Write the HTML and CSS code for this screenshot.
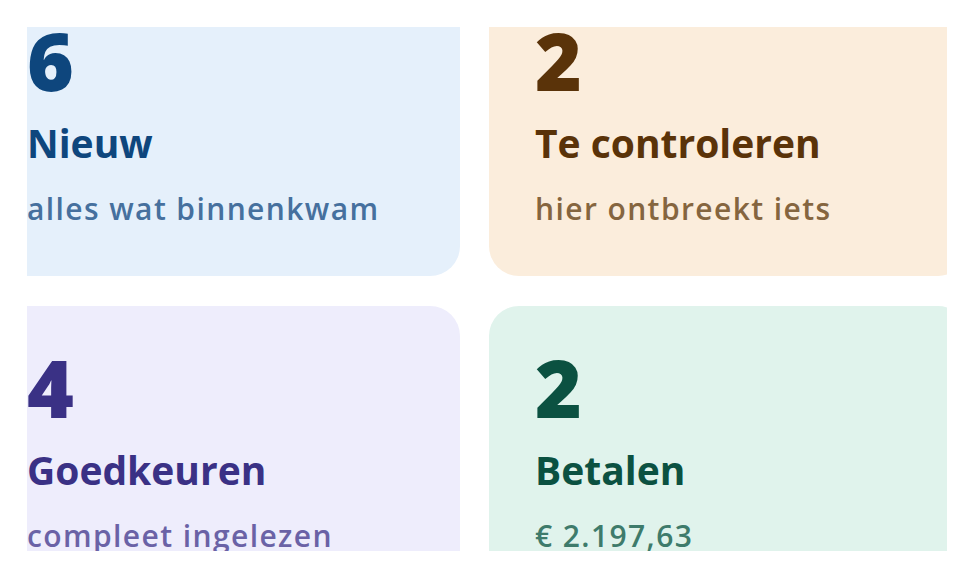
FILE: index.html
```html
<!DOCTYPE html>
<html lang="nl">
  <head>
    <meta charset="UTF-8" />
    <meta name="viewport" content="width=device-width, initial-scale=1.0" />
    <title>Facturen overzicht</title>
    <link rel="stylesheet" href="styles.css">
  </head>
  <body>
    <div class="viewport">
      <div class="tiles">
        <div class="tile tile-new">
          <div class="count">6</div>
          <div class="label">Nieuw</div>
          <div class="hint">alles wat binnenkwam</div>
        </div>
        <div class="tile tile-check">
          <div class="count">2</div>
          <div class="label">Te controleren</div>
          <div class="hint">hier ontbreekt iets</div>
        </div>
        <div class="tile tile-approve">
          <div class="count">4</div>
          <div class="label">Goedkeuren</div>
          <div class="hint">compleet ingelezen</div>
        </div>
        <div class="tile tile-pay">
          <div class="count">2</div>
          <div class="label">Betalen</div>
          <div class="hint">€ 2.197,63</div>
        </div>
      </div>
    </div>
  </body>
</html>
```

FILE: styles.css
```css
body {
  margin: 0;
  background: #fff;
  font-family: 'Open Sans', 'Noto Sans', sans-serif;
}
.viewport {
  margin: 27px 0 0 27px;
  width: 920px;
  height: 524px;
  overflow: hidden; /* het overzicht is uitgesneden */
}
.tiles {
  display: grid;
  grid-template-columns: 479px 479px;
  column-gap: 29px;
  row-gap: 30px;
  margin: -48px 0 0 -46px;
}
.tile {
  box-sizing: border-box;
  height: 297px;
  padding: 41px 46px 0;
  border-radius: 30px;
}
.count {
  font-size: 80px;
  line-height: 80px;
  font-weight: 800;
}
.label {
  margin-top: 19px;
  font-size: 39px;
  line-height: 48px;
  font-weight: 700;
}
.hint {
  margin-top: 22px;
  font-size: 30px;
  line-height: 40px;
  font-weight: 600;
  letter-spacing: 1.4px;
}
.tile-new {
  background: #e5f0fb;
  color: #0e467d;
}
.tile-new .hint {
  color: #46709e;
}
.tile-check {
  background: #fbeddc;
  color: #5a3309;
}
.tile-check .hint {
  color: #85653f;
}
.tile-approve {
  background: #eeedfc;
  color: #3a3185;
}
.tile-approve .hint {
  color: #6a62a6;
}
.tile-pay {
  background: #e0f3ec;
  color: #0b5141;
}
.tile-pay .hint {
  color: #3e7b6b;
}
```
